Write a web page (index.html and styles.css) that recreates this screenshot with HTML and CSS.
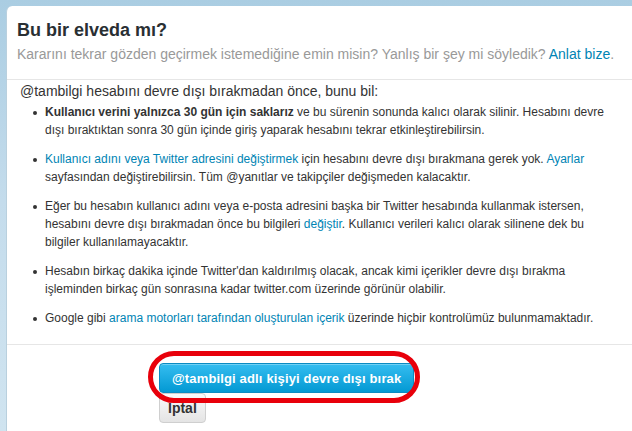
FILE: index.html
```html
<!DOCTYPE html>
<html>
<head>
	<meta charset="UTF-8">
	<title>Bu bir elveda mı?</title>
	<link rel="stylesheet" href="styles.css">
</head>
<body>
	<div class="card">
		<div class="card-header">
			<h1 class="card-title">Bu bir elveda mı?</h1>
			<p class="card-sub">Kararını tekrar gözden geçirmek istemediğine emin misin? Yanlış bir şey mi söyledik? <a href="#">Anlat bize</a>.</p>
		</div>
		<div class="card-body">
			<p class="lead">@tambilgi hesabını devre dışı bırakmadan önce, bunu bil:</p>
			<ul class="notes">
				<li><b>Kullanıcı verini yalnızca 30 gün için saklarız</b> ve bu sürenin sonunda kalıcı olarak silinir. Hesabını devre dışı bıraktıktan sonra 30 gün içinde giriş yaparak hesabını tekrar etkinleştirebilirsin.</li>
				<li><a href="#">Kullanıcı adını veya Twitter adresini değiştirmek</a> için hesabını devre dışı bırakmana gerek yok. <a href="#">Ayarlar</a> sayfasından değiştirebilirsin. Tüm @yanıtlar ve takipçiler değişmeden kalacaktır.</li>
				<li>Eğer bu hesabın kullanıcı adını veya e-posta adresini başka bir Twitter hesabında kullanmak istersen, hesabını devre dışı bırakmadan önce bu bilgileri <a href="#">değiştir</a>. Kullanıcı verileri kalıcı olarak silinene dek bu bilgiler kullanılamayacaktır.</li>
				<li>Hesabın birkaç dakika içinde Twitter'dan kaldırılmış olacak, ancak kimi içerikler devre dışı bırakma işleminden birkaç gün sonrasına kadar twitter.com üzerinde görünür olabilir.</li>
				<li>Google gibi <a href="#">arama motorları tarafından oluşturulan içerik</a> üzerinde hiçbir kontrolümüz bulunmamaktadır.</li>
			</ul>
		</div>
		<div class="card-footer">
			<div class="marked">
				<button class="btn-primary" type="button">@tambilgi adlı kişiyi devre dışı bırak</button>
			</div>
			<button class="btn-cancel" type="button">İptal</button>
		</div>
	</div>
</body>
</html>
```

FILE: styles.css
```css
/* Basic styles */
body {
	margin: 0;
	padding: 6px 0 0 6px;
	height: 425px;
	overflow: hidden;
	font-family: Arial, "Liberation Sans", sans-serif;
	color: #333;
	background: linear-gradient(to bottom, #aacde2 0px, #c4dcec 200px, #d0e4f0 431px);
}
a {
	color: #0084b4;
	text-decoration: none;
}
.card {
	background-color: #fff;
	border-left: 1px solid #b9d0de;
	border-radius: 6px 0 0 0;
	min-height: 430px;
}
.card-header {
	padding: 13px 10px 0 10px;
	height: 60px;
	border-bottom: 1px solid #e6e6e6;
}
.card-title {
	margin: 0;
	font-size: 18px;
	line-height: 22px;
	font-weight: bold;
	color: #292f33;
}
.card-sub {
	margin: 4px 0 0 0;
	font-size: 14px;
	line-height: 18px;
	color: #999;
	white-space: nowrap;
}
.card-body {
	padding: 2px 10px 0 13px;
	height: 262px;
	border-bottom: 1px solid #e6e6e6;
}
.lead {
	margin: 0 0 3px 0;
	font-size: 14px;
	line-height: 18px;
}
.notes {
	margin: 0;
	padding: 0 0 0 25px;
	list-style: none;
}
.notes li {
	position: relative;
	font-size: 12px;
	line-height: 18px;
	margin-bottom: 11px;
	padding-right: 10px;
}
.notes li::before {
	content: "";
	position: absolute;
	left: -12px;
	top: 8px;
	width: 4px;
	height: 4px;
	border-radius: 50%;
	background-color: #333;
}
.card-footer {
	padding: 18px 0 0 152px;
}
.marked {
	position: relative;
	display: inline-block;
}
.marked::after {
	content: "";
	position: absolute;
	left: -11px;
	top: -12px;
	right: -6px;
	bottom: -10px;
	border: 5px solid #e8000b;
	border-radius: 26px;
}
.btn-primary {
	display: block;
	height: 30px;
	padding: 0 12px;
	font-family: Arial, "Liberation Sans", sans-serif;
	font-size: 13px;
	font-weight: bold;
	letter-spacing: 0.15px;
	color: #fff;
	border: 1px solid #0b8bc2;
	border-radius: 4px;
	background: linear-gradient(to bottom, #35bdf0, #0399d3);
	box-shadow: inset 0 1px 0 rgba(255, 255, 255, 0.3);
}
.btn-cancel {
	display: block;
	margin-top: 0;
	height: 30px;
	padding: 0 8px;
	font-family: Arial, "Liberation Sans", sans-serif;
	font-size: 14px;
	font-weight: bold;
	color: #333;
	border: 1px solid #cfcfcf;
	border-radius: 4px;
	background: linear-gradient(to bottom, #fafafa, #e4e4e4);
}
```
